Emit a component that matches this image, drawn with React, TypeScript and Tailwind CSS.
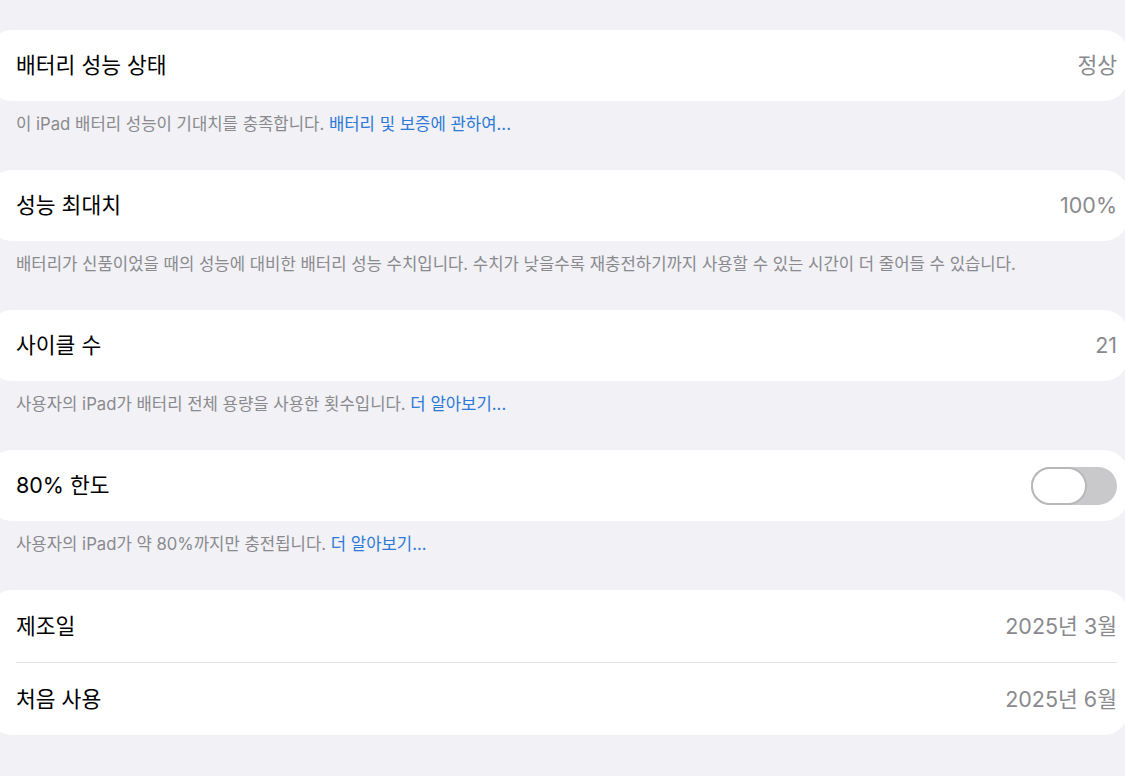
import React from "react";

const font = { fontFamily: '"Inter", "Noto Sans CJK KR", sans-serif' };

function Card({ children }: { children: React.ReactNode }) {
  return <div className="ml-[-12px] mr-[-3px] rounded-[24px] bg-white pl-[28px] pr-[11px]">{children}</div>;
}

function Row({ title, value, children }: { title: string; value?: string; children?: React.ReactNode }) {
  return (
    <div className="flex h-[71px] items-center justify-between">
      <span className="text-[21.5px] text-black">{title}</span>
      {value && <span className="text-[21.5px] text-[#8a8a8e]">{value}</span>}
      {children}
    </div>
  );
}

function Footer({ text, link }: { text: string; link?: string }) {
  return (
    <div className="h-[69px] px-[16px] pt-[11px] text-[16.7px] leading-[24px] text-[#8a8a8e]">
      {text}
      {link && <span className="text-[#2d7ad6]"> {link}</span>}
    </div>
  );
}

function Toggle() {
  return (
    <div className="relative h-[38px] w-[86px] rounded-full bg-[#c9c9cb]">
      <div className="absolute left-0 top-0 h-[38px] w-[56px] rounded-full border-[2.5px] border-[#b8b8bb] bg-white" />
    </div>
  );
}

export default function App() {
  return (
    <div className="min-h-[776px] w-[1125px] overflow-hidden bg-[#f1f1f6] pt-[30px]" style={font}>
      <Card>
        <Row title="배터리 성능 상태" value="정상" />
      </Card>
      <Footer text="이 iPad 배터리 성능이 기대치를 충족합니다." link="배터리 및 보증에 관하여..." />
      <Card>
        <Row title="성능 최대치" value="100%" />
      </Card>
      <Footer text="배터리가 신품이었을 때의 성능에 대비한 배터리 성능 수치입니다. 수치가 낮을수록 재충전하기까지 사용할 수 있는 시간이 더 줄어들 수 있습니다." />
      <Card>
        <Row title="사이클 수" value="21" />
      </Card>
      <Footer text="사용자의 iPad가 배터리 전체 용량을 사용한 횟수입니다." link="더 알아보기..." />
      <Card>
        <Row title="80% 한도">
          <Toggle />
        </Row>
      </Card>
      <Footer text="사용자의 iPad가 약 80%까지만 충전됩니다." link="더 알아보기..." />
      <Card>
        <div className="flex h-[72px] items-center justify-between">
          <span className="text-[21.5px] text-black">제조일</span>
          <span className="text-[21.5px] text-[#8a8a8e]">2025년 3월</span>
        </div>
        <div className="h-px bg-[#e2e2e6]" />
        <div className="flex h-[72px] items-center justify-between">
          <span className="text-[21.5px] text-black">처음 사용</span>
          <span className="text-[21.5px] text-[#8a8a8e]">2025년 6월</span>
        </div>
      </Card>
    </div>
  );
}
